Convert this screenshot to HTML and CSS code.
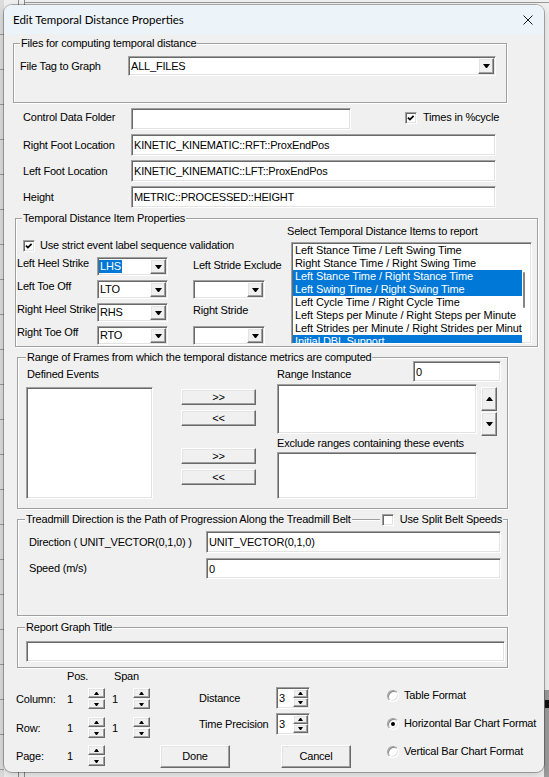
FILE: index.html
```html
<!DOCTYPE html>
<html>
<head>
<meta charset="utf-8">
<title>Edit Temporal Distance Properties</title>
<link rel="stylesheet" href="styles.css">
</head>
<body>
<div class="dialog">
  <div class="titlebar">
    <span class="title">Edit Temporal Distance Properties</span>
    <svg class="close" width="10" height="10" viewBox="0 0 10 10"><path d="M0.5 0.5L9.5 9.5M9.5 0.5L0.5 9.5" stroke="#1a1a1a" stroke-width="1" fill="none"/></svg>
  </div>

  <div class="group g-files">
    <div class="gtitle t-files">Files for computing temporal distance</div>
    <div class="row r-filetag">
      <span class="lbl l-filetag">File Tag to Graph</span>
      <div class="combo sunken c-wide"><span class="ctext">ALL_FILES</span><span class="dropbtn raised"><span class="tri-down"></span></span></div>
    </div>
  </div>

  <div class="fields">
    <div class="row r-field r-control">
      <span class="lbl l-field l-control">Control Data Folder</span>
      <div class="edit sunken e-control"></div>
      <span class="check sunken c-times"><svg width="8" height="8" viewBox="0 0 8 8"><polyline points="0.9,3.6 2.9,5.6 6.6,1.8" fill="none" stroke="#000" stroke-width="1.7"/></svg></span>
      <span class="lbl l-times">Times in %cycle</span>
    </div>
    <div class="row r-field">
      <span class="lbl l-field">Right Foot Location</span>
      <div class="edit sunken e-long">KINETIC_KINEMATIC::RFT::ProxEndPos</div>
    </div>
    <div class="row r-field">
      <span class="lbl l-field">Left Foot Location</span>
      <div class="edit sunken e-long">KINETIC_KINEMATIC::LFT::ProxEndPos</div>
    </div>
    <div class="row r-field">
      <span class="lbl l-field">Height</span>
      <div class="edit sunken e-long">METRIC::PROCESSED::HEIGHT</div>
    </div>
  </div>

  <div class="group g-items">
    <div class="gtitle t-items">Temporal Distance Item Properties</div>
    <div class="items-body">
      <div class="items-left">
        <div class="row r-strict">
          <span class="check sunken"><svg width="8" height="8" viewBox="0 0 8 8"><polyline points="0.9,3.6 2.9,5.6 6.6,1.8" fill="none" stroke="#000" stroke-width="1.7"/></svg></span>
          <span class="lbl l-strict">Use strict event label sequence validation</span>
        </div>
        <div class="evgrid">
          <span class="lbl evl">Left Heel Strike</span>
          <div class="combo sunken c-small"><span class="ctext"><span class="hl">LHS</span></span><span class="dropbtn raised"><span class="tri-down"></span></span></div>
          <span class="lbl midl midl-1">Left Stride Exclude</span>

          <span class="lbl evl">Left Toe Off</span>
          <div class="combo sunken c-small"><span class="ctext">LTO</span><span class="dropbtn raised"><span class="tri-down"></span></span></div>
          <div class="combo sunken c-small c-mid"><span class="ctext"></span><span class="dropbtn raised"><span class="tri-down"></span></span></div>

          <span class="lbl evl">Right Heel Strike</span>
          <div class="combo sunken c-small"><span class="ctext">RHS</span><span class="dropbtn raised"><span class="tri-down"></span></span></div>
          <span class="lbl midl midl-2">Right Stride</span>

          <span class="lbl evl">Right Toe Off</span>
          <div class="combo sunken c-small"><span class="ctext">RTO</span><span class="dropbtn raised"><span class="tri-down"></span></span></div>
          <div class="combo sunken c-small c-mid"><span class="ctext"></span><span class="dropbtn raised"><span class="tri-down"></span></span></div>
        </div>
      </div>
      <div class="items-right">
        <div class="lbl l-select">Select Temporal Distance Items to report</div>
        <div class="listbox sunken lb-items">
          <div class="li">Left Stance Time / Left Swing Time</div>
          <div class="li">Right Stance Time / Right Swing Time</div>
          <div class="li sel">Left Stance Time / Right Stance Time</div>
          <div class="li sel">Left Swing Time / Right Swing Time</div>
          <div class="li">Left Cycle Time / Right Cycle Time</div>
          <div class="li">Left Steps per Minute / Right Steps per Minute</div>
          <div class="li">Left Strides per Minute / Right Strides per Minute</div>
          <div class="li sel">Initial DBL Support</div>
          <span class="thumb"></span>
        </div>
      </div>
    </div>
  </div>

  <div class="group g-range">
    <div class="gtitle t-range">Range of Frames from which the temporal distance metrics are computed</div>
    <div class="range-body">
      <div class="col-a">
        <div class="lbl l-defined">Defined Events</div>
        <div class="listbox sunken lb-defined"></div>
      </div>
      <div class="col-b">
        <div class="pbtn raised mv mv-1">&gt;&gt;</div>
        <div class="pbtn raised mv mv-2">&lt;&lt;</div>
        <div class="pbtn raised mv mv-3">&gt;&gt;</div>
        <div class="pbtn raised mv mv-4">&lt;&lt;</div>
      </div>
      <div class="col-c">
        <div class="row r-instance">
          <span class="lbl l-instance">Range Instance</span>
          <div class="edit sunken e-instance">0</div>
        </div>
        <div class="r-rangelist">
          <div class="listbox sunken lb-range"></div>
          <div class="vspin">
            <span class="raised vsb"><span class="tri-up"></span></span>
            <span class="raised vsb"><span class="tri-down"></span></span>
          </div>
        </div>
        <div class="lbl l-exclude">Exclude ranges containing these events</div>
        <div class="listbox sunken lb-exclude"></div>
      </div>
    </div>
  </div>

  <div class="group g-tread">
    <div class="gtitle-row">
      <span class="gtitle-in">Treadmill Direction is the Path of Progression Along the Treadmill Belt</span>
      <span class="split">
        <span class="check sunken"></span>
        <span class="lbl l-split">Use Split Belt Speeds</span>
      </span>
    </div>
    <div class="row r-dir">
      <span class="lbl l-dir">Direction ( UNIT_VECTOR(0,1,0) )</span>
      <div class="edit sunken e-dir">UNIT_VECTOR(0,1,0)</div>
    </div>
    <div class="row r-speed">
      <span class="lbl l-dir">Speed (m/s)</span>
      <div class="edit sunken e-dir e-speed">0</div>
    </div>
  </div>

  <div class="group g-report">
    <div class="gtitle t-report">Report Graph Title</div>
    <div class="edit sunken e-report"></div>
  </div>

  <div class="bottom">
    <div class="bleft">
      <div class="btop">
        <div class="spins">
          <div class="sp-head"><span class="h-pos">Pos.</span><span class="h-span">Span</span></div>
          <div class="sp-row sp-row-1">
            <span class="lbl sp-lbl">Column:</span>
            <span class="sp-val">1</span>
            <span class="spin"><span class="raised sb"><span class="tri-up-s"></span></span><span class="raised sb"><span class="tri-down-s"></span></span></span>
            <span class="sp-val sp-val2">1</span>
            <span class="spin"><span class="raised sb"><span class="tri-up-s"></span></span><span class="raised sb"><span class="tri-down-s"></span></span></span>
          </div>
          <div class="sp-row sp-row-2">
            <span class="lbl sp-lbl">Row:</span>
            <span class="sp-val">1</span>
            <span class="spin"><span class="raised sb"><span class="tri-up-s"></span></span><span class="raised sb"><span class="tri-down-s"></span></span></span>
            <span class="sp-val sp-val2">1</span>
            <span class="spin"><span class="raised sb"><span class="tri-up-s"></span></span><span class="raised sb"><span class="tri-down-s"></span></span></span>
          </div>
        </div>
        <div class="dist">
          <div class="row d-row">
            <span class="lbl d-lbl">Distance</span>
            <div class="spinedit sunken"><span class="se-text">3</span><span class="se-spin"><span class="raised sb"><span class="tri-up-s"></span></span><span class="raised sb"><span class="tri-down-s"></span></span></span></div>
          </div>
          <div class="row d-row d-row-2">
            <span class="lbl d-lbl">Time Precision</span>
            <div class="spinedit sunken"><span class="se-text">3</span><span class="se-spin"><span class="raised sb"><span class="tri-up-s"></span></span><span class="raised sb"><span class="tri-down-s"></span></span></span></div>
          </div>
        </div>
      </div>
      <div class="bbot">
        <div class="sp-row sp-row-page">
          <span class="lbl sp-lbl">Page:</span>
          <span class="sp-val">1</span>
          <span class="spin"><span class="raised sb"><span class="tri-up-s"></span></span><span class="raised sb"><span class="tri-down-s"></span></span></span>
        </div>
        <div class="pbtn raised b-done">Done</div>
        <div class="pbtn raised b-cancel">Cancel</div>
      </div>
    </div>
    <div class="radios">
      <div class="rrow"><span class="radio"></span><span class="lbl r-lbl">Table Format</span></div>
      <div class="rrow"><span class="radio on"><span class="dot"></span></span><span class="lbl r-lbl">Horizontal Bar Chart Format</span></div>
      <div class="rrow"><span class="radio"></span><span class="lbl r-lbl">Vertical Bar Chart Format</span></div>
    </div>
  </div>
</div>
</body>
</html>
```

FILE: styles.css
```css
* { box-sizing: border-box; }
html, body { margin: 0; padding: 0; }
body {
  width: 549px;
  height: 777px;
  overflow: hidden;
  padding: 5px 0 0 4px;
  font-family: "Liberation Sans", Arial, sans-serif;
  font-size: 11px;
  line-height: 13px;
  letter-spacing: -0.2px;
  color: #000;
  background:
    linear-gradient(#111, #111) 545px 700px / 4px 8px no-repeat,
    linear-gradient(#9c9c9c, #9c9c9c) 544px 690px / 5px 87px no-repeat,
    linear-gradient(#9a9a9a, #9a9a9a) 25px 2px / 524px 1px no-repeat,
    linear-gradient(90deg, transparent 18px, #8a8a8a 18px, #8a8a8a 19px, transparent 19px, transparent 24px, #8a8a8a 24px, #8a8a8a 25px, transparent 25px) 0 0 / 100% 5px no-repeat,
    linear-gradient(90deg, transparent 18px, #8a8a8a 18px, #8a8a8a 19px, transparent 19px, transparent 24px, #8a8a8a 24px, #8a8a8a 25px, transparent 25px) 0 772px / 100% 5px no-repeat,
    repeating-linear-gradient(#dcdcdc 0 34px, #9a9a9a 34px 35px) 0 0 / 4px 100% no-repeat,
    #f0f0f0;
}

.dialog {
  width: 540px;
  height: 767px;
  background: #f0f0f0;
  border-radius: 8px;
  overflow: hidden;
  display: flex;
  flex-direction: column;
  box-shadow: 0 0 0 1px rgba(0, 0, 0, 0.28), 0 3px 10px rgba(0, 0, 0, 0.18);
}

.titlebar {
  flex: none;
  height: 29px;
  background: #edf4f9;
  display: flex;
  align-items: center;
  padding-left: 9px;
}
.title {
  font-family: Lato, "Liberation Sans", sans-serif;
  font-size: 11.5px;
  letter-spacing: 0;
  color: #000;
}
.close { margin-left: auto; margin-right: 11px; }

/* generic */
.lbl { white-space: nowrap; }
.row { display: flex; align-items: center; }
.sunken {
  background: #fff;
  border: 1px solid;
  border-color: #a0a0a0 #fff #fff #a0a0a0;
  box-shadow: inset 1px 1px 0 #696969, inset -1px -1px 0 #e3e3e3;
}
.raised {
  background: #f0f0f0;
  border: 1px solid;
  border-color: #fff #696969 #696969 #fff;
  box-shadow: inset -1px -1px 0 #a0a0a0, inset 1px 1px 0 #e3e3e3;
}
.edit {
  display: flex;
  align-items: center;
  padding: 1px 2px 0 2px;
  white-space: nowrap;
  overflow: hidden;
  flex: none;
}
.combo { display: flex; padding: 1px; flex: none; }
.ctext { flex: 1; display: flex; align-items: center; padding-left: 1px; white-space: nowrap; overflow: hidden; }
.dropbtn { width: 16px; flex: none; display: flex; align-items: center; justify-content: center; }
.tri-down { width: 1px; height: 0; border-left: 3px solid transparent; border-right: 3px solid transparent; border-top: 4px solid #000; box-sizing: content-box; }
.tri-up { width: 1px; height: 0; border-left: 3px solid transparent; border-right: 3px solid transparent; border-bottom: 4px solid #000; box-sizing: content-box; }
.tri-up-s { width: 1px; height: 0; border-left: 2px solid transparent; border-right: 2px solid transparent; border-bottom: 3px solid #000; box-sizing: content-box; }
.tri-down-s { width: 1px; height: 0; border-left: 2px solid transparent; border-right: 2px solid transparent; border-top: 3px solid #000; box-sizing: content-box; }
.check { width: 12px; height: 12px; flex: none; display: flex; align-items: center; justify-content: center; }
.listbox { position: relative; overflow: hidden; padding: 1px; flex: none; }
.pbtn { display: flex; align-items: center; justify-content: center; flex: none; }

/* group boxes */
.group {
  flex: none;
  border: 1px solid #a0a0a0;
  box-shadow: inset 1px 1px 0 #fff, 1px 1px 0 #fff;
}
.gtitle {
  width: max-content;
  height: 13px;
  margin-top: -7px;
  padding: 0 1px;
  background: #f0f0f0;
  white-space: nowrap;
}

/* files group */
.g-files { margin: 9px 0 0 9px; width: 494px; height: 60px; }
.t-files { margin-left: 6px; }
.r-filetag { margin: 6px 0 0 6px; }
.l-filetag { width: 108px; }
.c-wide { width: 368px; height: 20px; }

/* fields */
.fields { flex: none; margin: 5px 0 0 19px; }
.r-field { height: 22px; margin-top: 4px; }
.r-field:first-child { margin-top: 0; }
.r-control { align-items: flex-start; }
.l-field { width: 108px; }
.l-control { margin-top: 3px; }
.e-control { width: 220px; height: 22px; }
.e-long { width: 365px; height: 22px; }
.c-times { margin: 4px 0 0 54px; }
.l-times { margin: 3px 0 0 6px; }

/* items group */
.g-items { margin: 10px 0 0 11px; width: 523px; height: 129px; }
.t-items { margin-left: 6px; }
.items-body { display: flex; }
.items-left { width: 270px; padding-left: 1px; flex: none; }
.r-strict { margin: 14px 0 0 6px; height: 13px; }
.l-strict { margin-left: 5px; }
.evgrid {
  display: grid;
  grid-template-columns: 80px 71px 25px 72px;
  grid-auto-rows: 19px;
  row-gap: 4px;
  margin-top: 5px;
}
.evl { grid-column: 1; align-self: start; }
.c-small { width: 71px; height: 19px; grid-column: 2; position: relative; }
.midl { grid-column: 4; align-self: start; }
.midl-1 { margin-top: 2px; }
.midl-2 { margin-top: 1px; }
.c-mid { grid-column: 4; width: 72px; }
.hl { background: #0078d7; color: #fff; padding: 0 1px; margin-left: -1px; }
.items-right { flex: none; }
.l-select { padding-left: 1px; height: 13px; }
.lb-items { margin: 4px 0 0 5px; width: 241px; height: 102px; }
.li {
  width: 229px;
  height: 13px;
  line-height: 13px;
  padding-left: 2px;
  white-space: nowrap;
  overflow: hidden;
  letter-spacing: -0.1px;
}
.li.sel { background: #0078d7; color: #fff; }
.thumb { position: absolute; left: 231px; top: 29px; width: 2px; height: 36px; background: #858585; border-radius: 1px; }

/* range group */
.g-range { margin: 10px 0 0 13px; width: 491px; height: 152px; }
.t-range { margin-left: 8px; }
.range-body { display: flex; margin-top: -3px; }
.col-a { margin-left: 8px; width: 127px; flex: none; }
.l-defined { margin: 7px 0 0 1px; height: 13px; }
.lb-defined { margin-top: 6px; width: 127px; height: 112px; }
.col-b { margin-left: 28px; width: 75px; flex: none; }
.mv { width: 75px; height: 16px; }
.mv-1 { margin-top: 28px; }
.mv-2 { margin-top: 5px; }
.mv-3 { margin-top: 22px; }
.mv-4 { margin-top: 5px; }
.col-c { margin-left: 21px; width: 224px; flex: none; }
.r-instance { align-items: flex-start; height: 21px; }
.l-instance { margin-top: 7px; }
.e-instance { margin-left: auto; width: 88px; height: 21px; }
.r-rangelist { display: flex; align-items: flex-start; margin-top: 2px; }
.lb-range { width: 200px; height: 50px; }
.vspin { margin: 3px 0 0 4px; width: 16px; display: flex; flex-direction: column; gap: 1px; }
.vsb { height: 24px; display: flex; align-items: center; justify-content: center; }
.l-exclude { margin-top: 1px; height: 13px; }
.lb-exclude { margin-top: 2px; width: 200px; height: 47px; }

/* treadmill group */
.g-tread { margin: 10px 0 0 13px; width: 491px; height: 97px; }
.gtitle-row { display: flex; height: 13px; margin-top: -7px; }
.gtitle-in { margin-left: 7px; padding: 0 1px; background: #f0f0f0; white-space: nowrap; }
.split { margin-left: auto; margin-right: 4px; padding: 0 1px 0 2px; background: #f0f0f0; display: flex; align-items: center; }
.l-split { margin-left: 6px; }
.r-dir { margin: 5px 0 0 11px; }
.r-speed { margin: 5px 0 0 11px; }
.l-dir { width: 177px; }
.e-dir { width: 295px; height: 22px; }
.e-speed { height: 21px; }

/* report group */
.g-report { margin: 11px 0 0 13px; width: 491px; height: 41px; }
.t-report { margin-left: 7px; }
.e-report { margin: 7px 0 0 8px; width: 479px; height: 21px; }

/* bottom area */
.bottom { display: flex; flex: none; }
.bleft { width: 382px; flex: none; }
.btop { display: flex; }
.spins { margin-left: 12px; }
.sp-head { display: flex; height: 13px; margin-top: 2px; }
.h-pos { margin-left: 51px; width: 47px; }
.sp-row { display: flex; align-items: flex-start; height: 21px; }
.sp-row-1 { margin-top: 5px; }
.sp-row-2 { margin-top: 8px; }
.sp-lbl { width: 51px; margin-top: 5px; }
.sp-val { width: 21px; margin-top: 5px; }
.sp-val2 { width: 28px; padding-left: 7px; }
.spin { width: 17px; display: flex; flex-direction: column; gap: 1px; flex: none; }
.sb { height: 10px; display: flex; align-items: center; justify-content: center; }
.dist { margin: 19px 0 0 49px; }
.d-row { height: 22px; }
.d-row-2 { margin-top: 4px; }
.d-lbl { width: 77px; }
.spinedit { width: 34px; height: 22px; display: flex; padding: 1px; }
.se-text { width: 16px; display: flex; align-items: center; padding-left: 1px; }
.se-spin { width: 16px; display: flex; flex-direction: column; }
.se-spin .sb { flex: 1; height: auto; }
.bbot { display: flex; align-items: flex-start; margin-top: 7px; }
.sp-row-page { margin-left: 12px; }
.b-done { margin-left: 55px; width: 70px; height: 23px; }
.b-cancel { margin-left: 51px; width: 70px; height: 23px; }

.radios { margin-top: 21px; padding-left: 1px; }
.rrow { display: flex; align-items: center; height: 13px; margin-bottom: 15px; }
.radio {
  width: 12px;
  height: 12px;
  flex: none;
  border-radius: 50%;
  background: #fff;
  border: 1px solid;
  border-color: #a0a0a0 #fff #fff #a0a0a0;
  box-shadow: inset 1px 1px 0 #8a8a8a, inset -1px -1px 0 #e3e3e3;
  display: flex;
  align-items: center;
  justify-content: center;
}
.dot { width: 4px; height: 4px; border-radius: 50%; background: #000; }
.r-lbl { margin-left: 5px; }
```
